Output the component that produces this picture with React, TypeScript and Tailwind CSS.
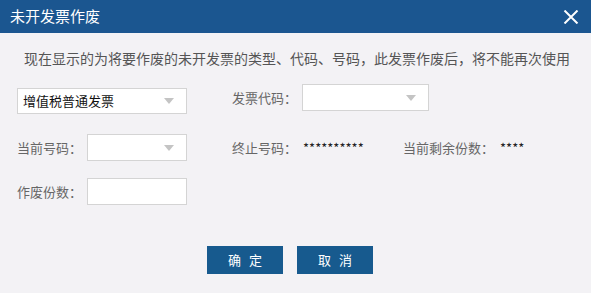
import React from 'react';

const font = { fontFamily: '"Microsoft YaHei", "Noto Sans CJK SC", "Noto Sans", sans-serif' };

function Arrow() {
  return (
    <svg width="10" height="6" viewBox="0 0 10 6" className="shrink-0">
      <path d="M0 0 L10 0 L5 6 Z" fill="#c4c4c4" />
    </svg>
  );
}

function Select({ value, className }: { value?: string; className: string }) {
  return (
    <div className={`flex items-center justify-between bg-white border border-[#d4d4d4] pl-[5px] pr-[12px] ${className}`}>
      <span className="text-[13px] text-[#111]">{value}</span>
      <Arrow />
    </div>
  );
}

export default function App() {
  return (
    <div className="w-[591px] h-[293px] bg-[#f3f2f5] flex flex-col" style={font}>
      <div className="h-[33px] bg-[#1b5690] flex items-center justify-between pl-[10px] pr-[12px]">
        <span className="text-white text-[15px]">未开发票作废</span>
        <svg width="16" height="14" viewBox="0 0 16 14">
          <path d="M1.5 0.5 L14.5 13.5 M14.5 0.5 L1.5 13.5" stroke="white" strokeWidth="2" />
        </svg>
      </div>

      <p className="mt-[15px] pl-[24px] text-[14px] leading-[20px] text-[#555]">
        现在显示的为将要作废的未开发票的类型、代码、号码，此发票作废后，将不能再次使用
      </p>

      <div className="mt-[16px] flex items-start pl-[17px]">
        <Select value="增值税普通发票" className="w-[170px] h-[26px] mt-[4px]" />
        <div className="flex items-center ml-[45px] h-[27px]">
          <span className="text-[13px] text-[#666] w-[70px]">发票代码：</span>
          <Select className="w-[127px] h-[27px]" />
        </div>
      </div>

      <div className="mt-[20px] flex items-center pl-[17px] h-[27px]">
        <span className="text-[13px] text-[#666] w-[70px]">当前号码：</span>
        <Select className="w-[100px] h-[27px]" />
        <span className="text-[13px] text-[#666] ml-[45px]">终止号码：</span>
        <span className="text-[13px] text-[#222] ml-[6px] w-[100px]">**********</span>
        <span className="text-[13px] text-[#666]">当前剩余份数：</span>
        <span className="text-[13px] text-[#222] ml-[6px]">****</span>
      </div>

      <div className="mt-[17px] flex items-center pl-[17px] h-[27px]">
        <span className="text-[13px] text-[#666] w-[70px]">作废份数：</span>
        <div className="w-[100px] h-[27px] bg-white border border-[#d4d4d4]" />
      </div>

      <div className="mt-[41px] flex pl-[207px] gap-[14px]">
        <button className="w-[76px] h-[28px] bg-[#175a8e] text-white text-[13px] tracking-[8px] pl-[8px]">确定</button>
        <button className="w-[76px] h-[28px] bg-[#175a8e] text-white text-[13px] tracking-[8px] pl-[8px]">取消</button>
      </div>
    </div>
  );
}
